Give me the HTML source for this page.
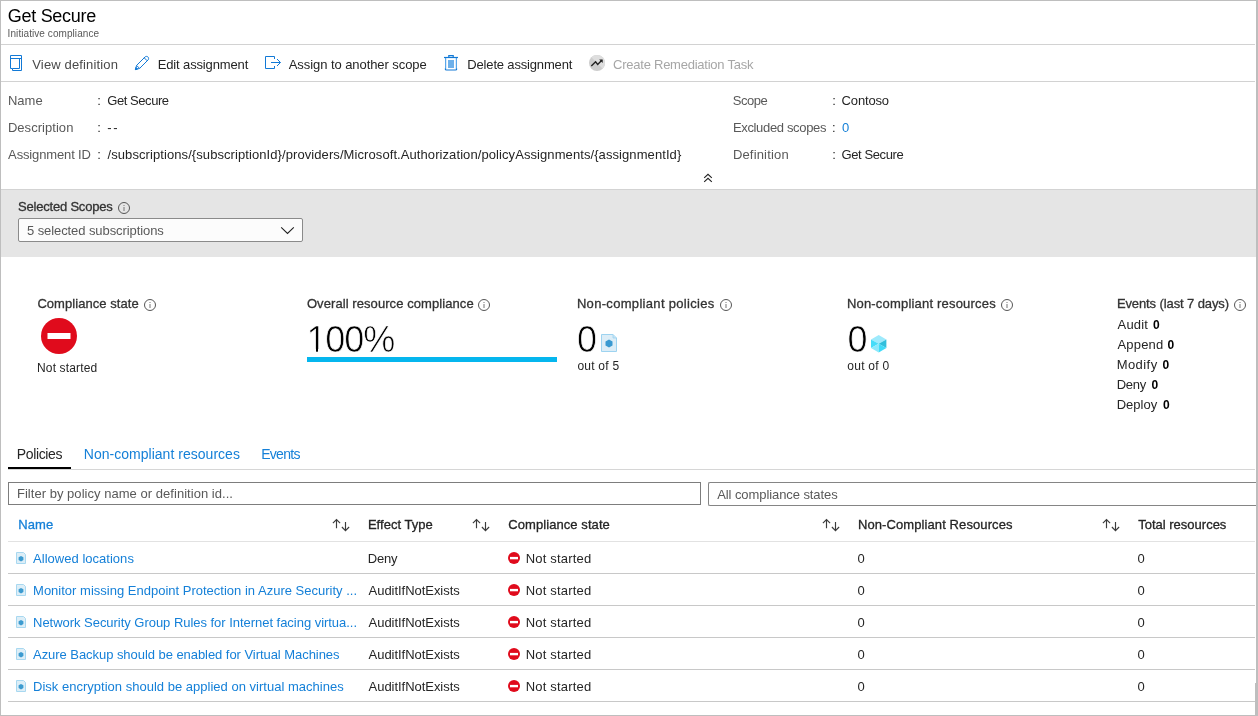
<!DOCTYPE html>
<html><head><meta charset="utf-8"><title>Get Secure</title>
<style>
html,body{margin:0;padding:0;}
body{width:1258px;height:716px;overflow:hidden;background:#fff;position:relative;font-family:"Liberation Sans",sans-serif;}
.t{position:absolute;white-space:nowrap;}
.a{position:absolute;}
.hl{position:absolute;height:1px;background:#c8c8c8;}
svg{position:absolute;overflow:visible;}
#w{position:absolute;left:0;top:0;width:1258px;height:716px;will-change:transform;}

</style></head>
<body>
<div id="w">
<div class="a" style="left:0;top:0;width:1258px;height:1px;background:#bebebe"></div>
<div class="a" style="left:0;top:0;width:1px;height:716px;background:#bebebe"></div>
<div class="a" style="left:0;top:715px;width:1258px;height:1px;background:#bebebe"></div>
<div class="a" style="left:1256px;top:0;width:2px;height:716px;background:#bebebe"></div>
<div class="a" style="left:1255px;top:683px;width:3px;height:33px;background:#bebebe"></div>
<div class="hl" style="left:1px;top:44px;width:1254px;background:#d2d2d2"></div>
<div class="hl" style="left:1px;top:81px;width:1254px;background:#d2d2d2"></div>
<div class="a" style="left:1px;top:189px;width:1255px;height:68px;background:#e5e5e5"></div>
<div class="a" style="left:1px;top:189px;width:1255px;height:1px;background:#d3d3d3"></div>
<div class="a" style="left:18px;top:218px;width:283px;height:22px;border:1px solid #8a8a8a;background:#fcfcfc;border-radius:2px"></div>
<div class="a" style="left:307px;top:357px;width:250px;height:5px;background:#05b6ee"></div>
<div class="a" style="left:8px;top:467px;width:63px;height:2px;background:#000"></div>
<div class="hl" style="left:8px;top:469px;width:1247px;background:#d6d6d6"></div>
<div class="a" style="left:8px;top:482px;width:691px;height:21px;border:1px solid #7d7d7d"></div>
<div class="a" style="left:708px;top:482px;width:547px;height:22px;border:1px solid #858585;border-right:none;border-radius:2px 0 0 2px"></div>
<div class="hl" style="left:8px;top:541px;width:1247px;background:#e2e2e2"></div>
<div class="hl" style="left:8px;top:573px;width:1247px"></div>
<div class="hl" style="left:8px;top:605px;width:1247px"></div>
<div class="hl" style="left:8px;top:637px;width:1247px"></div>
<div class="hl" style="left:8px;top:669px;width:1247px"></div>
<div class="hl" style="left:8px;top:701px;width:1247px"></div>
<svg style="left:10px;top:55px" width="12" height="16" viewBox="0 0 12 16" fill="none" stroke="#1279d6" stroke-width="1"><path d="M0.5 0.5H11.5V15.5H2.5V13.5H0.5Z"/><path d="M0.5 3.5H11.5"/><path d="M2.5 13.5H9.5V3.5"/></svg>
<svg style="left:135px;top:56px" width="14" height="14" viewBox="0 0 14 14" fill="none" stroke="#1279d6" stroke-width="1" stroke-linejoin="round"><path d="M0.4 13.6L1.6 9.4L10 1C10.9 0.1 12.3 0.3 13 1C13.7 1.7 13.9 3.1 13 4L4.6 12.4Z"/><path d="M1.6 9.4L4.6 12.4"/><path d="M9.2 1.8L12.2 4.8"/><path d="M0.4 13.6L1 11.4L2.6 13Z" fill="#1279d6"/></svg>
<svg style="left:265px;top:56px" width="16" height="13" viewBox="0 0 16 13" fill="none" stroke="#1279d6" stroke-width="1"><path d="M9.5 3V0.5H0.5V12.5H9.5V10"/><path d="M6 6.5H15.3"/><path d="M12 3L15.5 6.5L12 10"/></svg>
<svg style="left:444px;top:54px" width="14" height="17" viewBox="0 0 14 17" fill="none"><path d="M1.6 3.5V15" stroke="#5aa7ea" stroke-width="1.25"/><path d="M12.4 3.5V15" stroke="#5aa7ea" stroke-width="1.25"/><path d="M1.2 14.6Q1.3 16 2.6 16H11.4Q12.7 16 12.8 14.6" stroke="#1279d6" stroke-width="1.2" fill="none"/><path d="M0 3.5H14" stroke="#1279d6" stroke-width="1.2"/><path d="M4.8 3.2V1.6H9.2V3.2" stroke="#1279d6" stroke-width="1.2"/><rect x="4" y="6" width="6" height="8" fill="#6db0ea"/></svg>
<svg style="left:589px;top:55px" width="16" height="16" viewBox="0 0 16 16"><circle cx="8" cy="8" r="8" fill="#cdcdcd"/><path d="M2.3 2.3A8 8 0 0 1 13.7 13.7Z" fill="#dedede"/><path d="M2.3 11L6.6 6.8L8.7 9.4L12.8 5.3" fill="none" stroke="#222" stroke-width="1.4"/><path d="M10.2 4.4H13.7V7.9Z" fill="#222"/></svg>
<svg style="left:704px;top:174px" width="8" height="8" viewBox="0 0 8 8" fill="none" stroke="#222" stroke-width="1.1"><path d="M0.2 3.9L4 0.3L7.8 3.9"/><path d="M0.2 7.9L4 4.3L7.8 7.9"/></svg>
<svg style="left:281px;top:227px" width="13" height="7" viewBox="0 0 13 7" fill="none" stroke="#222" stroke-width="1.1"><path d="M0.2 0.3L6.5 6.5L12.8 0.3"/></svg>
<svg style="left:117px;top:201px" width="14" height="14" viewBox="0 0 14 14"><circle cx="7" cy="7" r="5.5" fill="none" stroke="#555" stroke-width="1"/><rect x="6.5" y="6" width="1" height="4" fill="#777"/><rect x="6.5" y="4" width="1" height="1" fill="#777"/></svg>
<svg style="left:143px;top:298px" width="14" height="14" viewBox="0 0 14 14"><circle cx="7" cy="7" r="5.5" fill="none" stroke="#555" stroke-width="1"/><rect x="6.5" y="6" width="1" height="4" fill="#777"/><rect x="6.5" y="4" width="1" height="1" fill="#777"/></svg>
<svg style="left:477px;top:298px" width="14" height="14" viewBox="0 0 14 14"><circle cx="7" cy="7" r="5.5" fill="none" stroke="#555" stroke-width="1"/><rect x="6.5" y="6" width="1" height="4" fill="#777"/><rect x="6.5" y="4" width="1" height="1" fill="#777"/></svg>
<svg style="left:719px;top:298px" width="14" height="14" viewBox="0 0 14 14"><circle cx="7" cy="7" r="5.5" fill="none" stroke="#555" stroke-width="1"/><rect x="6.5" y="6" width="1" height="4" fill="#777"/><rect x="6.5" y="4" width="1" height="1" fill="#777"/></svg>
<svg style="left:1000px;top:298px" width="14" height="14" viewBox="0 0 14 14"><circle cx="7" cy="7" r="5.5" fill="none" stroke="#555" stroke-width="1"/><rect x="6.5" y="6" width="1" height="4" fill="#777"/><rect x="6.5" y="4" width="1" height="1" fill="#777"/></svg>
<svg style="left:1233px;top:298px" width="14" height="14" viewBox="0 0 14 14"><circle cx="7" cy="7" r="5.5" fill="none" stroke="#555" stroke-width="1"/><rect x="6.5" y="6" width="1" height="4" fill="#777"/><rect x="6.5" y="4" width="1" height="1" fill="#777"/></svg>
<svg style="left:41px;top:318px" width="36" height="36" viewBox="0 0 36 36"><circle cx="18" cy="18" r="18" fill="#e00b1c"/><rect x="6.5" y="15" width="23" height="6" fill="#fff"/></svg>
<svg style="left:601px;top:334px" width="16" height="18" viewBox="0 0 16 18"><path d="M0.5 0.5H12L15.5 4V17.5H0.5Z" fill="#dcedf7" stroke="#9dd3f0" stroke-width="1"/><path d="M12 0.5V4H15.5" fill="#c4e3f5" stroke="#9dd3f0" stroke-width="0.8"/><path d="M8 5.4L11.5 7.4V11.6L8 13.6L4.5 11.6V7.4Z" fill="#3999d1"/></svg>
<svg style="left:871px;top:334.5px" width="15.4" height="17.5" viewBox="0 0 15.4 17.5"><path d="M7.7 0L15.4 4.4L7.7 8.75L0 4.4Z" fill="#9eeafc"/><path d="M0 4.4L7.7 8.75L0 13.1Z" fill="#45dcf9"/><path d="M0 13.1L7.7 8.75V17.5Z" fill="#8be8fb"/><path d="M15.4 4.4L7.7 8.75L15.4 13.1Z" fill="#31bfdc"/><path d="M15.4 13.1L7.7 8.75V17.5Z" fill="#3fdbf8"/></svg>
<svg style="left:333px;top:519px" width="17" height="13" viewBox="0 0 17 13" fill="none" stroke="#3c3c3c" stroke-width="1.15"><path d="M3.5 0.6V9.2M-0.1 4.2L3.5 0.6L7.1 4.2"/><path d="M12.5 3V11.6M8.9 8L12.5 11.6L16.1 8"/></svg>
<svg style="left:473px;top:519px" width="17" height="13" viewBox="0 0 17 13" fill="none" stroke="#3c3c3c" stroke-width="1.15"><path d="M3.5 0.6V9.2M-0.1 4.2L3.5 0.6L7.1 4.2"/><path d="M12.5 3V11.6M8.9 8L12.5 11.6L16.1 8"/></svg>
<svg style="left:823px;top:519px" width="17" height="13" viewBox="0 0 17 13" fill="none" stroke="#3c3c3c" stroke-width="1.15"><path d="M3.5 0.6V9.2M-0.1 4.2L3.5 0.6L7.1 4.2"/><path d="M12.5 3V11.6M8.9 8L12.5 11.6L16.1 8"/></svg>
<svg style="left:1103px;top:519px" width="17" height="13" viewBox="0 0 17 13" fill="none" stroke="#3c3c3c" stroke-width="1.15"><path d="M3.5 0.6V9.2M-0.1 4.2L3.5 0.6L7.1 4.2"/><path d="M12.5 3V11.6M8.9 8L12.5 11.6L16.1 8"/></svg>
<svg style="left:16px;top:552px" width="10" height="12" viewBox="0 0 10 12"><path d="M0.5 0.5H7.5L9.5 2.5V11.5H0.5Z" fill="#ddeef7" stroke="#a8d8f0" stroke-width="1"/><path d="M5 3.9L7.4 5.3V8.1L5 9.5L2.6 8.1V5.3Z" fill="#3c9bd0"/></svg>
<svg style="left:508px;top:552px" width="12" height="12" viewBox="0 0 12 12"><circle cx="6" cy="6" r="6" fill="#e00b1c"/><rect x="2" y="4.9" width="8" height="2.4" fill="#fff"/></svg>
<svg style="left:16px;top:584px" width="10" height="12" viewBox="0 0 10 12"><path d="M0.5 0.5H7.5L9.5 2.5V11.5H0.5Z" fill="#ddeef7" stroke="#a8d8f0" stroke-width="1"/><path d="M5 3.9L7.4 5.3V8.1L5 9.5L2.6 8.1V5.3Z" fill="#3c9bd0"/></svg>
<svg style="left:508px;top:584px" width="12" height="12" viewBox="0 0 12 12"><circle cx="6" cy="6" r="6" fill="#e00b1c"/><rect x="2" y="4.9" width="8" height="2.4" fill="#fff"/></svg>
<svg style="left:16px;top:616px" width="10" height="12" viewBox="0 0 10 12"><path d="M0.5 0.5H7.5L9.5 2.5V11.5H0.5Z" fill="#ddeef7" stroke="#a8d8f0" stroke-width="1"/><path d="M5 3.9L7.4 5.3V8.1L5 9.5L2.6 8.1V5.3Z" fill="#3c9bd0"/></svg>
<svg style="left:508px;top:616px" width="12" height="12" viewBox="0 0 12 12"><circle cx="6" cy="6" r="6" fill="#e00b1c"/><rect x="2" y="4.9" width="8" height="2.4" fill="#fff"/></svg>
<svg style="left:16px;top:648px" width="10" height="12" viewBox="0 0 10 12"><path d="M0.5 0.5H7.5L9.5 2.5V11.5H0.5Z" fill="#ddeef7" stroke="#a8d8f0" stroke-width="1"/><path d="M5 3.9L7.4 5.3V8.1L5 9.5L2.6 8.1V5.3Z" fill="#3c9bd0"/></svg>
<svg style="left:508px;top:648px" width="12" height="12" viewBox="0 0 12 12"><circle cx="6" cy="6" r="6" fill="#e00b1c"/><rect x="2" y="4.9" width="8" height="2.4" fill="#fff"/></svg>
<svg style="left:16px;top:680px" width="10" height="12" viewBox="0 0 10 12"><path d="M0.5 0.5H7.5L9.5 2.5V11.5H0.5Z" fill="#ddeef7" stroke="#a8d8f0" stroke-width="1"/><path d="M5 3.9L7.4 5.3V8.1L5 9.5L2.6 8.1V5.3Z" fill="#3c9bd0"/></svg>
<svg style="left:508px;top:680px" width="12" height="12" viewBox="0 0 12 12"><circle cx="6" cy="6" r="6" fill="#e00b1c"/><rect x="2" y="4.9" width="8" height="2.4" fill="#fff"/></svg>

<span class="t" id="t0" style="left:7.75px;top:4.76px;font-size:18px;line-height:22px;color:#000;letter-spacing:-0.283px;">Get Secure</span>
<span class="t" id="t1" style="left:7.61px;top:27.54px;font-size:10px;line-height:12px;color:#595959;letter-spacing:0.070px;">Initiative compliance</span>
<span class="t" id="t2" style="left:32.29px;top:56.50px;font-size:13px;line-height:16px;color:#4a4a4a;letter-spacing:0.147px;">View definition</span>
<span class="t" id="t3" style="left:157.76px;top:56.50px;font-size:13px;line-height:16px;color:#252525;letter-spacing:-0.143px;">Edit assignment</span>
<span class="t" id="t4" style="left:288.75px;top:56.50px;font-size:13px;line-height:16px;color:#252525;letter-spacing:-0.067px;">Assign to another scope</span>
<span class="t" id="t5" style="left:467.32px;top:56.50px;font-size:13px;line-height:16px;color:#252525;letter-spacing:-0.166px;">Delete assignment</span>
<span class="t" id="t6" style="left:613.09px;top:56.50px;font-size:13px;line-height:16px;color:#a6a6a6;letter-spacing:-0.245px;">Create Remediation Task</span>
<span class="t" id="t7" style="left:7.91px;top:92.50px;font-size:13px;line-height:16px;color:#595959;letter-spacing:0.031px;">Name</span>
<span class="t" id="t8" style="left:97.33px;top:92.50px;font-size:13px;line-height:16px;color:#252525;">:</span>
<span class="t" id="t9" style="left:107.26px;top:92.50px;font-size:13px;line-height:16px;color:#252525;letter-spacing:-0.441px;">Get Secure</span>
<span class="t" id="t10" style="left:7.91px;top:119.50px;font-size:13px;line-height:16px;color:#595959;letter-spacing:0.044px;">Description</span>
<span class="t" id="t11" style="left:97.33px;top:119.50px;font-size:13px;line-height:16px;color:#252525;">:</span>
<span class="t" id="t12" style="left:107.33px;top:119.50px;font-size:13px;line-height:16px;color:#252525;letter-spacing:1.600px;">--</span>
<span class="t" id="t13" style="left:8.11px;top:146.50px;font-size:13px;line-height:16px;color:#595959;letter-spacing:-0.140px;">Assignment ID</span>
<span class="t" id="t14" style="left:97.33px;top:146.50px;font-size:13px;line-height:16px;color:#252525;">:</span>
<span class="t" id="t15" style="left:107.51px;top:146.50px;font-size:13px;line-height:16px;color:#252525;letter-spacing:0.082px;">/subscriptions/{subscriptionId}/providers/Microsoft.Authorization/policyAssignments/{assignmentId}</span>
<span class="t" id="t16" style="left:732.80px;top:92.50px;font-size:13px;line-height:16px;color:#595959;letter-spacing:-0.508px;">Scope</span>
<span class="t" id="t17" style="left:832.17px;top:92.50px;font-size:13px;line-height:16px;color:#252525;">:</span>
<span class="t" id="t18" style="left:841.60px;top:92.50px;font-size:13px;line-height:16px;color:#252525;letter-spacing:-0.162px;">Contoso</span>
<span class="t" id="t19" style="left:732.91px;top:119.50px;font-size:13px;line-height:16px;color:#595959;letter-spacing:-0.340px;">Excluded scopes</span>
<span class="t" id="t20" style="left:832.02px;top:119.50px;font-size:13px;line-height:16px;color:#252525;">:</span>
<span class="t" id="t21" style="left:841.91px;top:119.50px;font-size:13px;line-height:16px;color:#1580d8;">0</span>
<span class="t" id="t22" style="left:732.91px;top:146.50px;font-size:13px;line-height:16px;color:#595959;letter-spacing:0.171px;">Definition</span>
<span class="t" id="t23" style="left:832.17px;top:146.50px;font-size:13px;line-height:16px;color:#252525;">:</span>
<span class="t" id="t24" style="left:841.60px;top:146.50px;font-size:13px;line-height:16px;color:#252525;letter-spacing:-0.413px;">Get Secure</span>
<span class="t" id="t25" style="left:18.04px;top:198.50px;font-size:13px;line-height:16px;color:#333333;letter-spacing:-0.205px;-webkit-text-stroke:0.3px #333333;">Selected Scopes</span>
<span class="t" id="t26" style="left:26.97px;top:222.50px;font-size:13px;line-height:16px;color:#595959;letter-spacing:-0.084px;">5 selected subscriptions</span>
<span class="t" id="t27" style="left:37.38px;top:295.50px;font-size:13px;line-height:16px;color:#333333;letter-spacing:0.057px;-webkit-text-stroke:0.3px #333333;">Compliance state</span>
<span class="t" id="t28" style="left:37.00px;top:360.84px;font-size:12px;line-height:14px;color:#252525;letter-spacing:0.153px;">Not started</span>
<span class="t" id="t29" style="left:306.91px;top:295.50px;font-size:13px;line-height:16px;color:#333333;letter-spacing:0.077px;-webkit-text-stroke:0.3px #333333;">Overall resource compliance</span>
<span class="t" id="t30" style="left:306.45px;top:318.03px;font-size:36px;line-height:43px;color:#000;letter-spacing:-1.110px;-webkit-text-stroke:0.7px #fff;">100%</span>
<span class="t" id="t31" style="left:576.88px;top:295.50px;font-size:13px;line-height:16px;color:#333333;letter-spacing:0.319px;-webkit-text-stroke:0.3px #333333;">Non-compliant policies</span>
<span class="t" id="t32" style="left:576.91px;top:318.03px;font-size:36px;line-height:43px;color:#000;-webkit-text-stroke:0.7px #fff;">0</span>
<span class="t" id="t33" style="left:577.43px;top:358.84px;font-size:12px;line-height:14px;color:#252525;letter-spacing:0.233px;">out of 5</span>
<span class="t" id="t34" style="left:846.88px;top:295.50px;font-size:13px;line-height:16px;color:#333333;letter-spacing:0.196px;-webkit-text-stroke:0.3px #333333;">Non-compliant resources</span>
<span class="t" id="t35" style="left:847.41px;top:318.03px;font-size:36px;line-height:43px;color:#000;-webkit-text-stroke:0.7px #fff;">0</span>
<span class="t" id="t36" style="left:847.36px;top:358.84px;font-size:12px;line-height:14px;color:#252525;letter-spacing:0.241px;">out of 0</span>
<span class="t" id="t37" style="left:1116.92px;top:295.50px;font-size:13px;line-height:16px;color:#333333;letter-spacing:-0.108px;-webkit-text-stroke:0.3px #333333;">Events (last 7 days)</span>
<span class="t" id="t38" style="left:1117.52px;top:316.50px;font-size:13px;line-height:16px;color:#252525;letter-spacing:0.209px;">Audit</span>
<span class="t" id="t39" style="left:1152.93px;top:317.84px;font-size:12px;line-height:14px;color:#000;font-weight:700;">0</span>
<span class="t" id="t40" style="left:1117.52px;top:336.50px;font-size:13px;line-height:16px;color:#252525;letter-spacing:0.164px;">Append</span>
<span class="t" id="t41" style="left:1167.45px;top:337.84px;font-size:12px;line-height:14px;color:#000;font-weight:700;">0</span>
<span class="t" id="t42" style="left:1116.68px;top:356.50px;font-size:13px;line-height:16px;color:#252525;letter-spacing:0.440px;">Modify</span>
<span class="t" id="t43" style="left:1162.58px;top:357.84px;font-size:12px;line-height:14px;color:#000;font-weight:700;">0</span>
<span class="t" id="t44" style="left:1116.68px;top:376.50px;font-size:13px;line-height:16px;color:#252525;letter-spacing:-0.279px;">Deny</span>
<span class="t" id="t45" style="left:1151.39px;top:377.84px;font-size:12px;line-height:14px;color:#000;font-weight:700;">0</span>
<span class="t" id="t46" style="left:1116.68px;top:396.50px;font-size:13px;line-height:16px;color:#252525;letter-spacing:0.019px;">Deploy</span>
<span class="t" id="t47" style="left:1162.93px;top:397.84px;font-size:12px;line-height:14px;color:#000;font-weight:700;">0</span>
<span class="t" id="t48" style="left:16.87px;top:445.65px;font-size:14px;line-height:17px;color:#252525;letter-spacing:-0.372px;">Policies</span>
<span class="t" id="t49" style="left:83.76px;top:445.65px;font-size:14px;line-height:17px;color:#1580d8;letter-spacing:0.024px;">Non-compliant resources</span>
<span class="t" id="t50" style="left:261.20px;top:445.65px;font-size:14px;line-height:17px;color:#1580d8;letter-spacing:-0.713px;">Events</span>
<span class="t" id="t51" style="left:16.91px;top:485.50px;font-size:13px;line-height:16px;color:#595959;letter-spacing:0.036px;">Filter by policy name or definition id...</span>
<span class="t" id="t52" style="left:717.19px;top:486.50px;font-size:13px;line-height:16px;color:#595959;letter-spacing:-0.081px;">All compliance states</span>
<span class="t" id="t53" style="left:18.33px;top:516.50px;font-size:13px;line-height:16px;color:#1580d8;letter-spacing:0.066px;-webkit-text-stroke:0.3px #1580d8;">Name</span>
<span class="t" id="t54" style="left:367.89px;top:516.50px;font-size:13px;line-height:16px;color:#252525;letter-spacing:0.033px;-webkit-text-stroke:0.3px #252525;">Effect Type</span>
<span class="t" id="t55" style="left:508.23px;top:516.50px;font-size:13px;line-height:16px;color:#252525;letter-spacing:0.079px;-webkit-text-stroke:0.3px #252525;">Compliance state</span>
<span class="t" id="t56" style="left:857.92px;top:516.50px;font-size:13px;line-height:16px;color:#252525;letter-spacing:0.097px;-webkit-text-stroke:0.3px #252525;">Non-Compliant Resources</span>
<span class="t" id="t57" style="left:1138.15px;top:516.50px;font-size:13px;line-height:16px;color:#252525;letter-spacing:0.006px;-webkit-text-stroke:0.3px #252525;">Total resources</span>
<span class="t" id="t58" style="left:33.05px;top:550.50px;font-size:13px;line-height:16px;color:#1580d8;letter-spacing:0.024px;">Allowed locations</span>
<span class="t" id="t59" style="left:367.76px;top:550.50px;font-size:13px;line-height:16px;color:#252525;letter-spacing:-0.208px;">Deny</span>
<span class="t" id="t60" style="left:525.76px;top:550.50px;font-size:13px;line-height:16px;color:#252525;letter-spacing:0.190px;">Not started</span>
<span class="t" id="t61" style="left:857.60px;top:550.50px;font-size:13px;line-height:16px;color:#252525;">0</span>
<span class="t" id="t62" style="left:1137.60px;top:550.50px;font-size:13px;line-height:16px;color:#252525;">0</span>
<span class="t" id="t63" style="left:33.05px;top:582.50px;font-size:13px;line-height:16px;color:#1580d8;letter-spacing:0.005px;">Monitor missing Endpoint Protection in Azure Security ...</span>
<span class="t" id="t64" style="left:368.62px;top:582.50px;font-size:13px;line-height:16px;color:#252525;letter-spacing:-0.041px;">AuditIfNotExists</span>
<span class="t" id="t65" style="left:525.76px;top:582.50px;font-size:13px;line-height:16px;color:#252525;letter-spacing:0.190px;">Not started</span>
<span class="t" id="t66" style="left:857.60px;top:582.50px;font-size:13px;line-height:16px;color:#252525;">0</span>
<span class="t" id="t67" style="left:1137.60px;top:582.50px;font-size:13px;line-height:16px;color:#252525;">0</span>
<span class="t" id="t68" style="left:33.05px;top:614.50px;font-size:13px;line-height:16px;color:#1580d8;letter-spacing:-0.033px;">Network Security Group Rules for Internet facing virtua...</span>
<span class="t" id="t69" style="left:368.62px;top:614.50px;font-size:13px;line-height:16px;color:#252525;letter-spacing:-0.041px;">AuditIfNotExists</span>
<span class="t" id="t70" style="left:525.76px;top:614.50px;font-size:13px;line-height:16px;color:#252525;letter-spacing:0.190px;">Not started</span>
<span class="t" id="t71" style="left:857.60px;top:614.50px;font-size:13px;line-height:16px;color:#252525;">0</span>
<span class="t" id="t72" style="left:1137.60px;top:614.50px;font-size:13px;line-height:16px;color:#252525;">0</span>
<span class="t" id="t73" style="left:33.05px;top:646.50px;font-size:13px;line-height:16px;color:#1580d8;letter-spacing:-0.052px;">Azure Backup should be enabled for Virtual Machines</span>
<span class="t" id="t74" style="left:368.62px;top:646.50px;font-size:13px;line-height:16px;color:#252525;letter-spacing:-0.041px;">AuditIfNotExists</span>
<span class="t" id="t75" style="left:525.76px;top:646.50px;font-size:13px;line-height:16px;color:#252525;letter-spacing:0.190px;">Not started</span>
<span class="t" id="t76" style="left:857.60px;top:646.50px;font-size:13px;line-height:16px;color:#252525;">0</span>
<span class="t" id="t77" style="left:1137.60px;top:646.50px;font-size:13px;line-height:16px;color:#252525;">0</span>
<span class="t" id="t78" style="left:33.05px;top:678.50px;font-size:13px;line-height:16px;color:#1580d8;letter-spacing:0.011px;">Disk encryption should be applied on virtual machines</span>
<span class="t" id="t79" style="left:368.62px;top:678.50px;font-size:13px;line-height:16px;color:#252525;letter-spacing:-0.041px;">AuditIfNotExists</span>
<span class="t" id="t80" style="left:525.76px;top:678.50px;font-size:13px;line-height:16px;color:#252525;letter-spacing:0.190px;">Not started</span>
<span class="t" id="t81" style="left:857.60px;top:678.50px;font-size:13px;line-height:16px;color:#252525;">0</span>
<span class="t" id="t82" style="left:1137.60px;top:678.50px;font-size:13px;line-height:16px;color:#252525;">0</span>
<div class="a" style="left:308px;top:349px;width:8px;height:4px;background:#fff"></div><div class="a" style="left:318px;top:349px;width:9px;height:4px;background:#fff"></div>
</div>
</body></html>
